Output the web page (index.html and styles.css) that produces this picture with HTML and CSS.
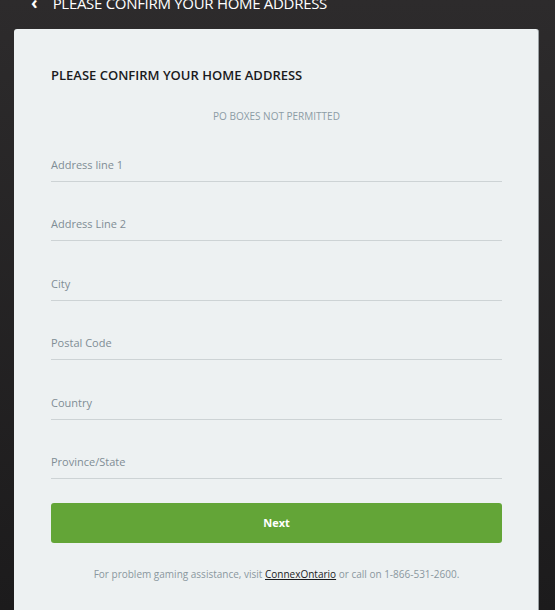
FILE: index.html
```html
<!DOCTYPE html>
<html lang="en">
<head>
<meta charset="utf-8">
<title>Confirm home address</title>
<link rel="stylesheet" href="styles.css">
</head>
<body>
<div class="topbar">
  <span class="back">&#8249;</span>
  <span class="top-title">PLEASE CONFIRM YOUR HOME ADDRESS</span>
</div>
<main class="card">
  <h1 class="title">PLEASE CONFIRM YOUR HOME ADDRESS</h1>
  <p class="note">PO BOXES NOT PERMITTED</p>
  <form class="fields">
    <label class="field"><span class="label">Address line 1</span></label>
    <label class="field"><span class="label">Address Line 2</span></label>
    <label class="field"><span class="label">City</span></label>
    <label class="field"><span class="label">Postal Code</span></label>
    <label class="field"><span class="label">Country</span></label>
    <label class="field"><span class="label">Province/State</span></label>
  </form>
  <button class="next" type="button">Next</button>
  <p class="help">For problem gaming assistance, visit <a href="#">ConnexOntario</a> or call on 1-866-531-2600.</p>
</main>
</body>
</html>
```

FILE: styles.css
```css
html, body {
  margin: 0;
  padding: 0;
}
body {
  height: 610px;
  overflow: hidden;
  background: linear-gradient(#2d2b2c, #1c1b1c);
  font-family: "Open Sans", "Noto Sans", sans-serif;
}
.topbar {
  display: flex;
  align-items: flex-start;
  gap: 15px;
  height: 29px;
  padding-left: 31px;
  color: #ffffff;
}
.back {
  margin-top: -8px;
  font-size: 18px;
  font-weight: 700;
  line-height: 20px;
}
.top-title {
  margin-top: -7px;
  font-size: 15px;
  line-height: 20px;
  letter-spacing: -0.3px;
}
.card {
  margin: 0 16px 0 14px;
  background: #edf1f2;
  border-radius: 3px;
  border-right: 1px solid #9aa0a3;
  padding: 37px 36px 40px 37px;
  display: flex;
  flex-direction: column;
}
.title {
  margin: 0;
  font-size: 13px;
  font-weight: 600;
  line-height: 18px;
  color: #1b1b1d;
}
.note {
  margin: 25px 0 0;
  text-align: center;
  font-size: 10px;
  line-height: 14px;
  color: #8c9ca5;
}
.fields {
  display: flex;
  flex-direction: column;
  gap: 33.4px;
  margin-top: 33px;
}
.field {
  display: block;
  padding-bottom: 8px;
  border-bottom: 1px solid #cdd3d5;
}
.label {
  display: block;
  padding-top: 1px;
  font-size: 11px;
  line-height: 16px;
  color: #7f8d95;
}
.next {
  margin-top: 24px;
  height: 40px;
  border: none;
  border-radius: 3px;
  background: #63a537;
  color: #ffffff;
  font-family: inherit;
  font-size: 11px;
  font-weight: 700;
}
.help {
  margin: 23px 0 0;
  text-align: center;
  font-size: 10px;
  line-height: 16px;
  color: #8a979e;
}
.help a {
  color: #1b1b1d;
}
```
